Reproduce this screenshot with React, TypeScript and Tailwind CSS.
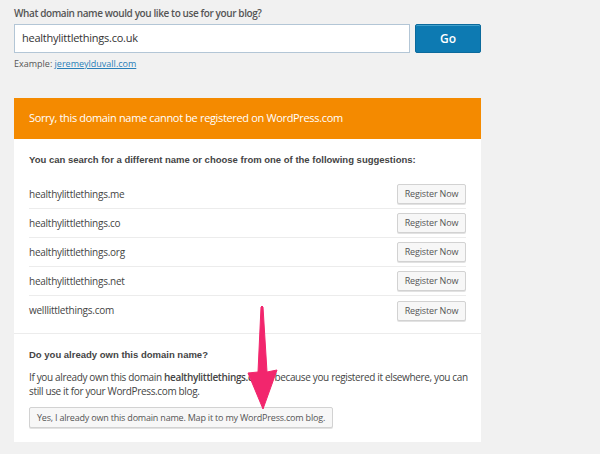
import React from "react";

const suggestions = [
  "healthylittlethings.me",
  "healthylittlethings.co",
  "healthylittlethings.org",
  "healthylittlethings.net",
  "welllittlethings.com",
];

function Arrow() {
  return (
    <svg className="absolute left-0 top-0 pointer-events-none" width="600" height="454" viewBox="0 0 600 454">
      <path
        d="M261 307 Q262 305 263 307 L267 372 L277 370 L263 409 L248 373 L258 372 Z"
        fill="#f2266d"
        stroke="#f2266d"
        strokeWidth="1"
        strokeLinejoin="round"
      />
    </svg>
  );
}

export default function App() {
  const sans = { fontFamily: '"Open Sans", "Noto Sans", sans-serif' };
  const helv = { fontFamily: '"Liberation Sans", Arial, sans-serif' };

  return (
    <div className="relative w-[600px] h-[454px] bg-[#f1f1f1] overflow-hidden text-[#444]" style={sans}>
      <div className="w-[481px] pl-[14px] pt-[6px]">
        <label className="block text-[10px] leading-[15px] font-semibold tracking-[-0.4px] text-[#555]">
          What domain name would you like to use for your blog?
        </label>
        <div className="flex gap-[5px] mt-[3px]">
          <div className="flex-1 h-[29px] bg-white border border-[#b3c6d6] flex items-center px-[7px] text-[11px] tracking-[-0.25px] text-[#333]">
            healthylittlethings.co.uk
          </div>
          <button className="w-[66px] h-[29px] rounded-[2px] bg-[#0d7ab2] border border-[#0b6a9c] text-white text-[12px] font-semibold shadow-[inset_0_1px_0_rgba(120,200,230,0.5)]">
            Go
          </button>
        </div>
        <p className="mt-[3px] text-[9px] leading-[15px] text-[#555]">
          Example: <span className="text-[#2a7fb8] underline">jeremeylduvall.com</span>
        </p>

        <div className="mt-[27px] h-[41px] bg-[#f48a00] flex items-center pl-[15px] text-white text-[11px] tracking-[-0.34px]">
          Sorry, this domain name cannot be registered on WordPress.com
        </div>

        <div className="bg-white">
          <div className="px-[15px] pt-[13px] pb-[8px]">
            <h3 className="text-[9.5px] leading-[16px] font-bold text-[#444]" style={helv}>
              You can search for a different name or choose from one of the following suggestions:
            </h3>
            <ul className="mt-[12px]">
              {suggestions.map((s, i) => (
                <li
                  key={s}
                  className={`h-[29px] flex items-center justify-between ${
                    i < suggestions.length - 1 ? "border-b border-[#ececec]" : ""
                  }`}
                >
                  <span className="text-[10px] tracking-[-0.25px] text-[#444]">{s}</span>
                  <button className="w-[69px] h-[20px] bg-[#f7f7f7] border border-[#d2d2d2] rounded-[2px] shadow-[0_1px_0_#e2e2e2] text-[9px] tracking-[-0.15px] text-[#555]">
                    Register Now
                  </button>
                </li>
              ))}
            </ul>
          </div>
          <div className="border-t border-[#ececec] px-[15px] pt-[13px] pb-[14px]">
            <h3 className="text-[9.5px] leading-[16px] font-bold text-[#444]" style={helv}>
              Do you already own this domain name?
            </h3>
            <p className="mt-[7px] text-[10px] leading-[14px] tracking-[-0.35px] text-[#444]">
              <span className="whitespace-nowrap">
                If you already own this domain <span className="font-semibold">healthylittlethings.co.uk</span> because
                you registered it elsewhere, you can
              </span>
              <br />
              still use it for your WordPress.com blog.
            </p>
            <button className="mt-[9px] h-[21px] px-[7px] bg-[#f7f7f7] border border-[#d2d2d2] rounded-[2px] shadow-[0_1px_0_#e2e2e2] text-[9px] tracking-[-0.2px] text-[#555]">
              Yes, I already own this domain name. Map it to my WordPress.com blog.
            </button>
          </div>
        </div>
      </div>
      <Arrow />
    </div>
  );
}
